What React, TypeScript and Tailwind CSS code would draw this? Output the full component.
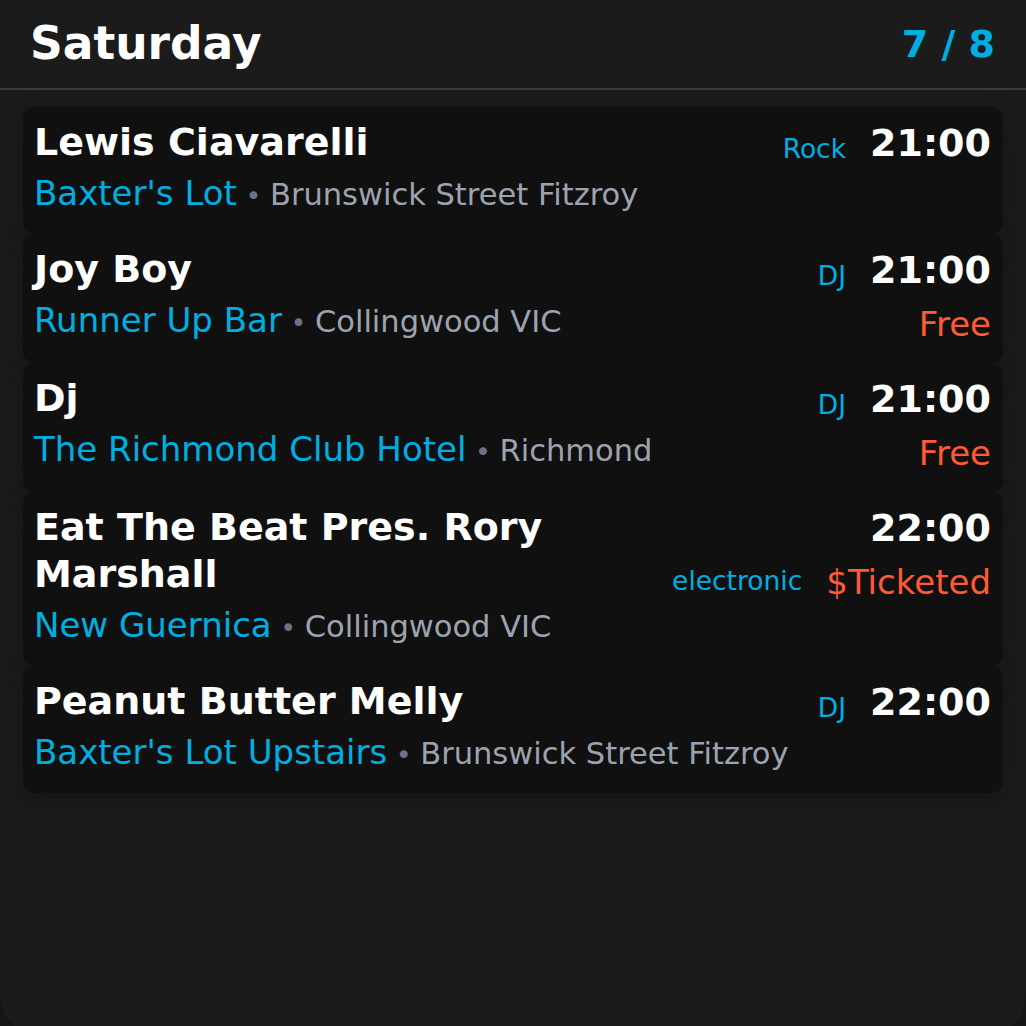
const CYAN = "text-[#00aee0]";

type Gig = {
  title: string;
  genre: string;
  time: string;
  venue: string;
  suburb: string;
  price?: string;
};

const GIGS: Gig[] = [
  { title: "Lewis Ciavarelli", genre: "Rock", time: "21:00", venue: "Baxter's Lot", suburb: "Brunswick Street Fitzroy" },
  { title: "Joy Boy", genre: "DJ", time: "21:00", venue: "Runner Up Bar", suburb: "Collingwood VIC", price: "Free" },
  { title: "Dj", genre: "DJ", time: "21:00", venue: "The Richmond Club Hotel", suburb: "Richmond", price: "Free" },
  { title: "Eat The Beat Pres. Rory Marshall", genre: "electronic", time: "22:00", venue: "New Guernica", suburb: "Collingwood VIC", price: "$Ticketed" },
  { title: "Peanut Butter Melly", genre: "DJ", time: "22:00", venue: "Baxter's Lot Upstairs", suburb: "Brunswick Street Fitzroy" },
];

function GigCard({ gig: g }: { gig: Gig }) {
  return (
    <div className="flex gap-6 rounded-xl bg-[#101010] pl-[11px] pr-3 pt-3 pb-[19px] shadow-[0_8px_24px_rgba(0,0,0,0.25)]">
      {/* Left: title + genre, venue line */}
      <div className="flex min-w-0 flex-1 flex-col">
        <div className="flex items-end gap-4">
          <div className="flex-1 text-[38px] font-bold leading-[47px] text-white">{g.title}</div>
          <div className={`text-[26.5px] leading-[35px] ${CYAN}`}>{g.genre}</div>
        </div>
        <div className="mt-2 whitespace-nowrap text-[34px] leading-[38px]">
          <span className={CYAN}>{g.venue}</span>
          <span className="text-[27px] text-[#6b7280]"> • </span>
          <span className="text-[30.5px] text-[#9ca3af]">{g.suburb}</span>
        </div>
      </div>

      {/* Right: time + price */}
      <div className="flex flex-col items-end">
        <div className="pt-[2px] text-[38px] font-bold leading-[45px] text-white">{g.time}</div>
        {g.price && (
          <div className="mt-3 text-[34px] leading-[39px] text-[#ff5a36]">{g.price}</div>
        )}
      </div>
    </div>
  );
}

export default function App() {
  return (
    <div className="h-[1026px] w-[1026px] overflow-hidden bg-[#151515] font-['DejaVu_Sans',sans-serif]">
      <div className="h-[1040px] rounded-b-[48px] bg-[#1b1b1b]">
        {/* Header */}
        <div className="flex h-[90px] items-center justify-between border-b-2 border-[#363b44] pl-[30px] pr-[31px]">
          <span className="text-[45.5px] font-bold text-white">Saturday</span>
          <span className={`text-[38px] font-bold ${CYAN}`}>7 / 8</span>
        </div>

        {/* Gig list */}
        <div className="mt-[17px] flex flex-col px-[23px]">
          {GIGS.map((g) => (
            <GigCard key={g.title} gig={g} />
          ))}
        </div>
      </div>
    </div>
  );
}
